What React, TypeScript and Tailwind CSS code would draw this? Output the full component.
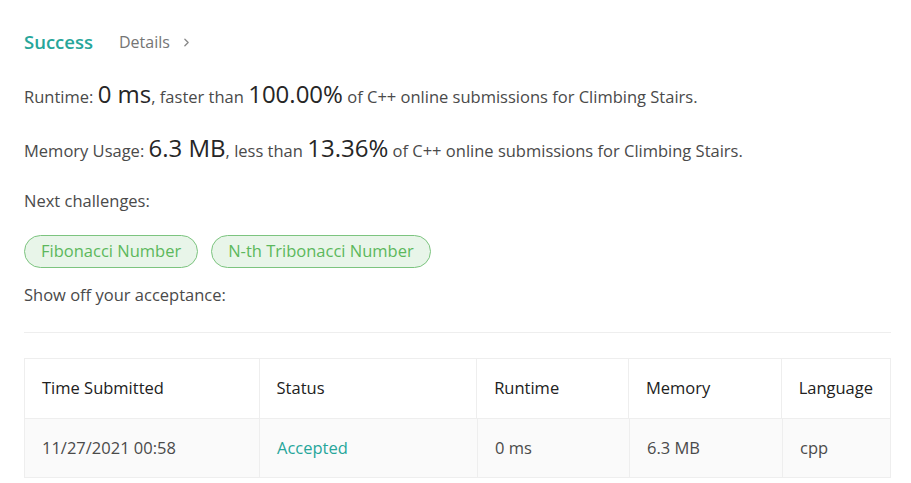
import { ChevronRight } from 'lucide-react';

const columns = [
  { label: 'Time Submitted', width: 'w-[234px]' },
  { label: 'Status', width: 'w-[218px]' },
  { label: 'Runtime', width: 'w-[152px]' },
  { label: 'Memory', width: 'w-[153px]' },
  { label: 'Language', width: 'flex-1' },
];

const row = ['11/27/2021 00:58', 'Accepted', '0 ms', '6.3 MB', 'cpp'];

const challenges = ['Fibonacci Number', 'N-th Tribonacci Number'];

export default function App() {
  return (
    <div className="w-[911px] h-[483px] overflow-hidden bg-white text-[#4a4a4a] font-['Open_Sans',sans-serif] pl-6 pr-5 pt-[29px] text-[16.5px]">
      {/* Header */}
      <div className="flex items-center gap-[26px] h-[26px]">
        <span className="text-[#26a69a] text-[18.5px] font-semibold">Success</span>
        <span className="flex items-center gap-[10px] text-[#757575] text-[16px]">
          Details
          <ChevronRight size={13} strokeWidth={2.5} className="mt-[1px] text-[#8a8a8a]" />
        </span>
      </div>

      {/* Stats */}
      <p className="mt-[23px] leading-[32px]">
        Runtime: <span className="text-[24px] text-[#262626]">0 ms</span>, faster than{' '}
        <span className="text-[24px] text-[#262626]">100.00%</span> of C++ online submissions for Climbing Stairs.
      </p>
      <p className="mt-[19px] leading-[32px]">
        Memory Usage: <span className="text-[24px] text-[#262626]">6.3 MB</span>, less than{' '}
        <span className="text-[24px] text-[#262626]">13.36%</span> of C++ online submissions for Climbing Stairs.
      </p>

      <p className="mt-[22px] leading-[24px]">Next challenges:</p>

      <div className="mt-[22px] flex gap-[13px]">
        {challenges.map((c) => (
          <span
            key={c}
            className="h-[33px] px-4 flex items-center rounded-full border border-[#7cc47f] bg-[#e8f5e9] text-[#5cb85c]"
          >
            {c}
          </span>
        ))}
      </div>

      <p className="mt-[15px] leading-[24px]">Show off your acceptance:</p>

      <div className="mt-[25px] border-t border-[#eeeeee]" />

      {/* Submissions table */}
      <div className="mt-[25px] border border-[#eeeeee]">
        <div className="flex h-[59px] bg-white text-[#212121]">
          {columns.map((col, i) => (
            <div
              key={col.label}
              className={`${col.width} flex items-center px-[17px] ${i > 0 ? 'border-l border-[#eeeeee]' : ''}`}
            >
              {col.label}
            </div>
          ))}
        </div>
        <div className="flex h-[59px] bg-[#fafafa] border-t border-[#eeeeee]">
          {row.map((cell, i) => (
            <div
              key={i}
              className={`${columns[i].width} flex items-center px-[17px] ${i > 0 ? 'border-l border-[#eeeeee]' : ''} ${
                i === 1 ? 'text-[#26a69a]' : ''
              }`}
            >
              {cell}
            </div>
          ))}
        </div>
      </div>
    </div>
  );
}
